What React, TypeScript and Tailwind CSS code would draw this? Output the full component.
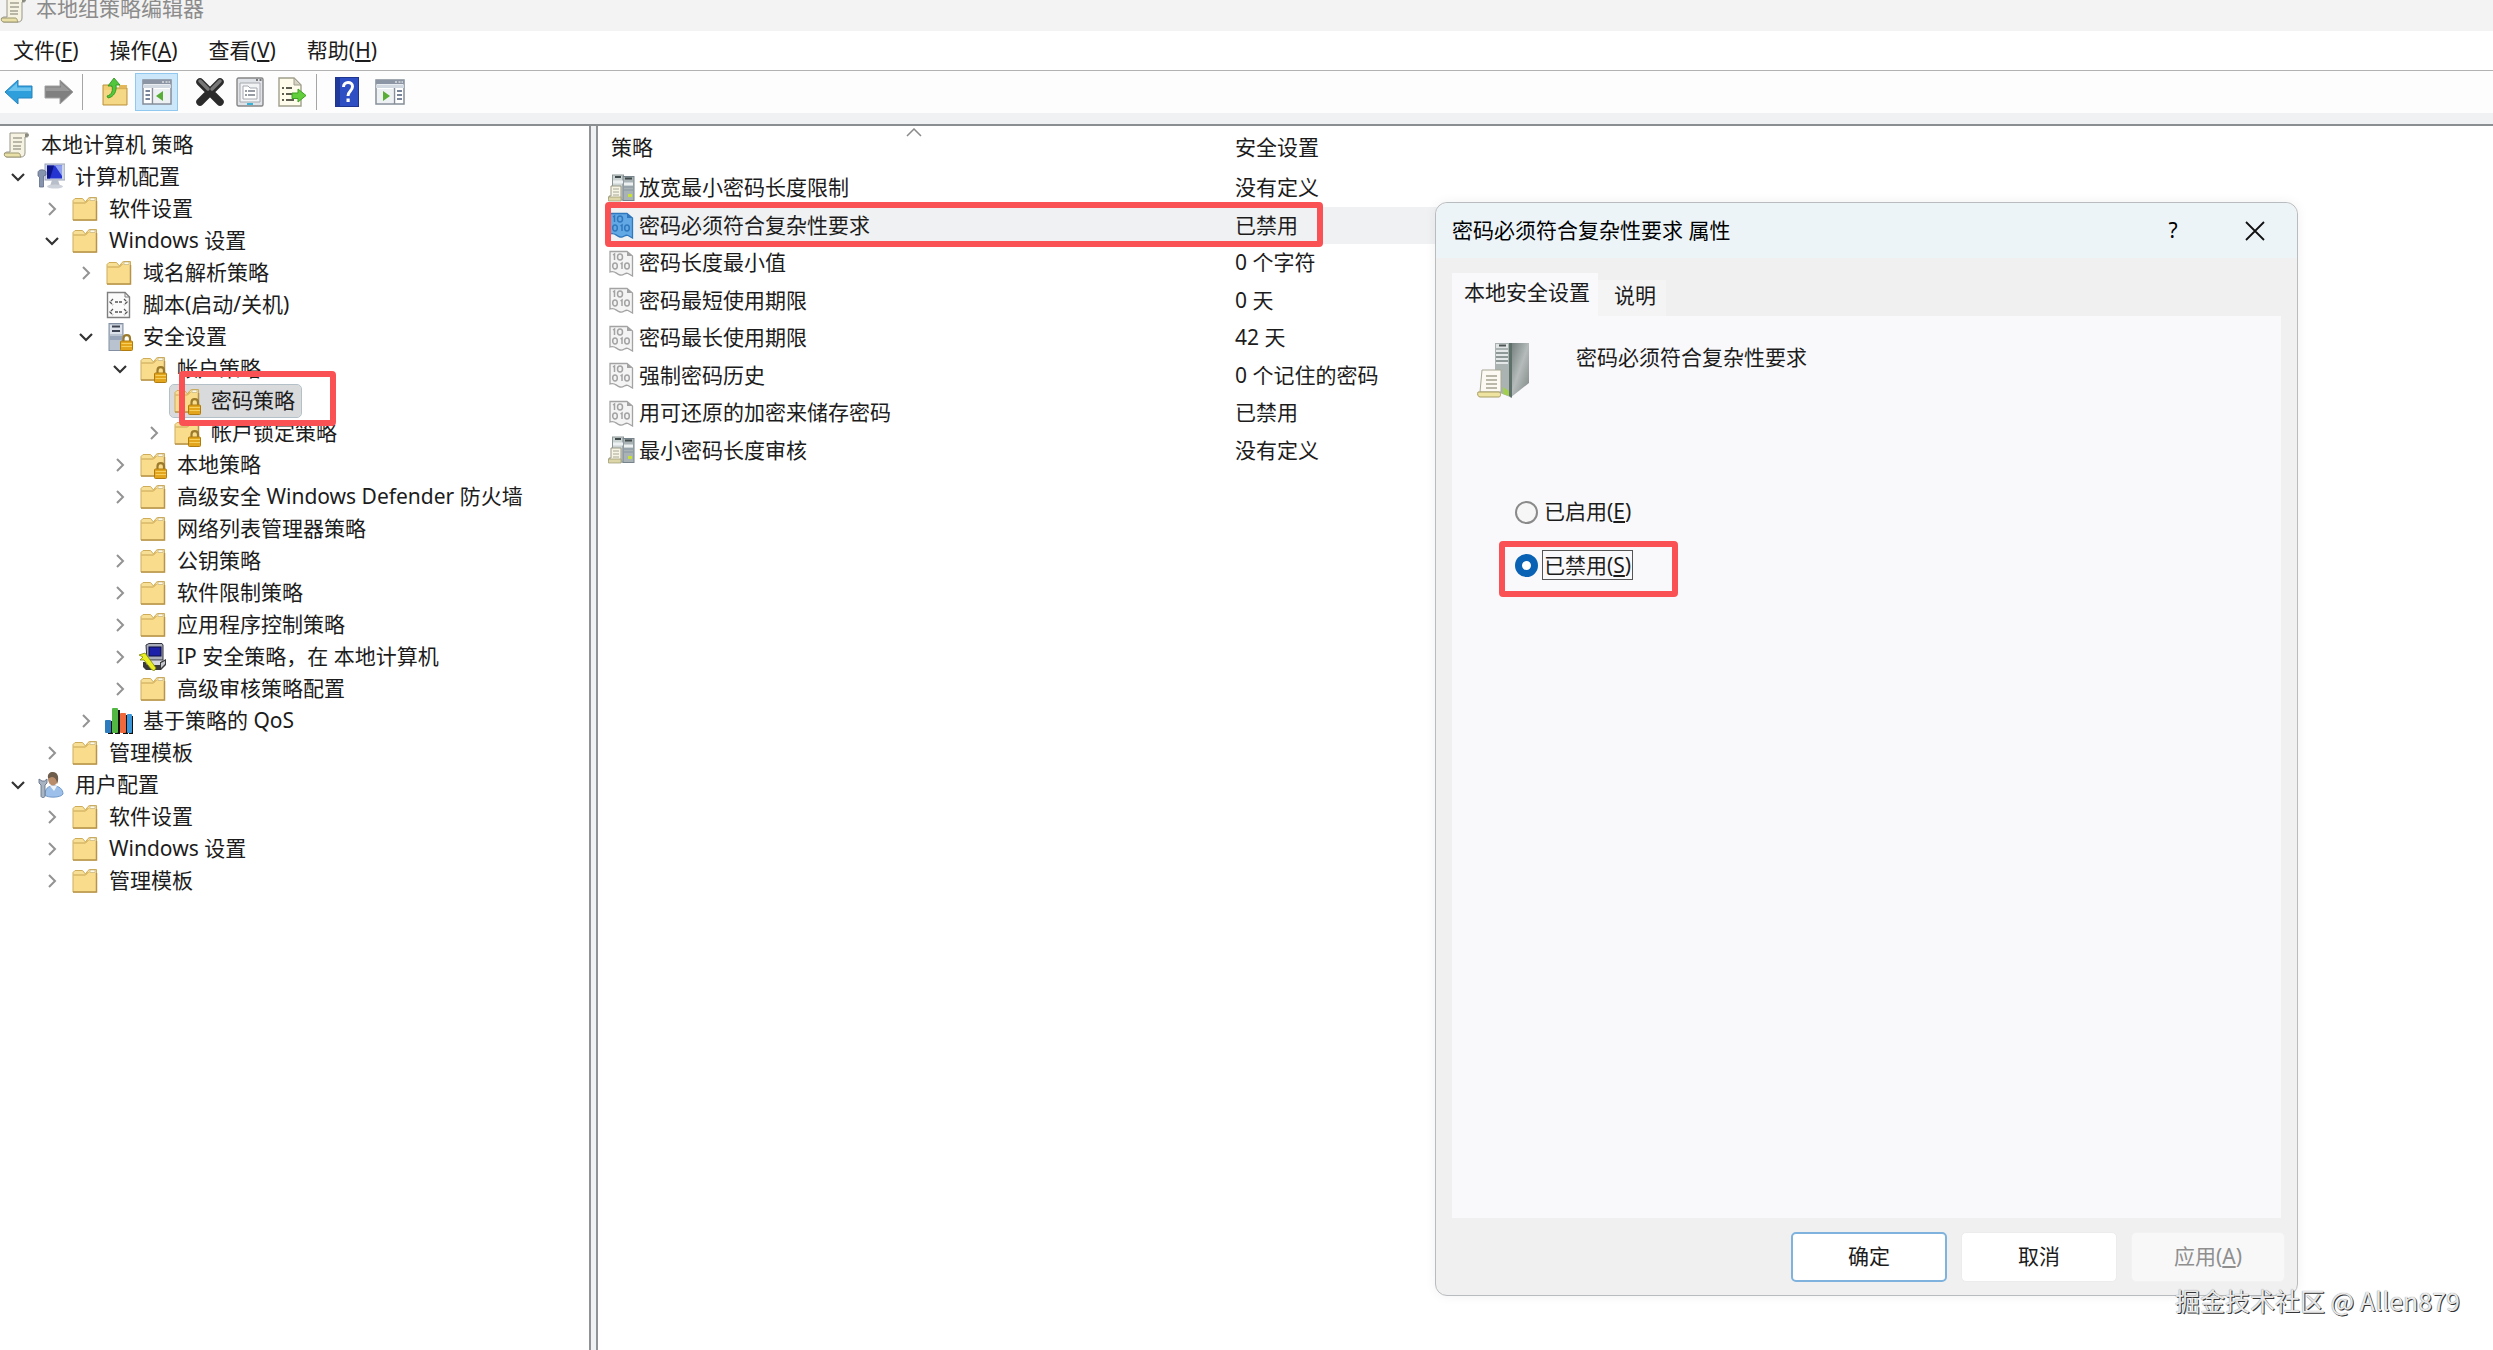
import { useState } from 'react'
import type { ReactNode } from 'react'

type IconName = 'scroll' | 'computer' | 'folder' | 'folderLock' | 'script' | 'security' | 'ipsec' | 'qos' | 'user'

type TreeNode = {
  level: number
  label: string
  icon: IconName
  state?: 'open' | 'closed'
  selected?: boolean
}

const tree: TreeNode[] = [
  { level: 0, label: '本地计算机 策略', icon: 'scroll' },
  { level: 1, label: '计算机配置', icon: 'computer', state: 'open' },
  { level: 2, label: '软件设置', icon: 'folder', state: 'closed' },
  { level: 2, label: 'Windows 设置', icon: 'folder', state: 'open' },
  { level: 3, label: '域名解析策略', icon: 'folder', state: 'closed' },
  { level: 3, label: '脚本(启动/关机)', icon: 'script' },
  { level: 3, label: '安全设置', icon: 'security', state: 'open' },
  { level: 4, label: '帐户策略', icon: 'folderLock', state: 'open' },
  { level: 5, label: '密码策略', icon: 'folderLock', selected: true },
  { level: 5, label: '帐户锁定策略', icon: 'folderLock', state: 'closed' },
  { level: 4, label: '本地策略', icon: 'folderLock', state: 'closed' },
  { level: 4, label: '高级安全 Windows Defender 防火墙', icon: 'folder', state: 'closed' },
  { level: 4, label: '网络列表管理器策略', icon: 'folder' },
  { level: 4, label: '公钥策略', icon: 'folder', state: 'closed' },
  { level: 4, label: '软件限制策略', icon: 'folder', state: 'closed' },
  { level: 4, label: '应用程序控制策略', icon: 'folder', state: 'closed' },
  { level: 4, label: 'IP 安全策略，在 本地计算机', icon: 'ipsec', state: 'closed' },
  { level: 4, label: '高级审核策略配置', icon: 'folder', state: 'closed' },
  { level: 3, label: '基于策略的 QoS', icon: 'qos', state: 'closed' },
  { level: 2, label: '管理模板', icon: 'folder', state: 'closed' },
  { level: 1, label: '用户配置', icon: 'user', state: 'open' },
  { level: 2, label: '软件设置', icon: 'folder', state: 'closed' },
  { level: 2, label: 'Windows 设置', icon: 'folder', state: 'closed' },
  { level: 2, label: '管理模板', icon: 'folder', state: 'closed' },
]

const policies = [
  { name: '放宽最小密码长度限制', value: '没有定义', kind: 'server' },
  { name: '密码必须符合复杂性要求', value: '已禁用', kind: 'binary', selected: true },
  { name: '密码长度最小值', value: '0 个字符', kind: 'binary' },
  { name: '密码最短使用期限', value: '0 天', kind: 'binary' },
  { name: '密码最长使用期限', value: '42 天', kind: 'binary' },
  { name: '强制密码历史', value: '0 个记住的密码', kind: 'binary' },
  { name: '用可还原的加密来储存密码', value: '已禁用', kind: 'binary' },
  { name: '最小密码长度审核', value: '没有定义', kind: 'server' },
]

const indent = ['pl-0', 'pl-0', 'pl-[34px]', 'pl-[68px]', 'pl-[102px]', 'pl-[136px]']

function ScrollIcon() {
  return (
    <svg width="28" height="28" viewBox="0 0 28 28" aria-hidden="true">
      <path d="M7 2H24C26 2 26 6 24 6H22V22C22 25 20 26 18 26H4C1 26 1 21 4 21H7Z" fill="#f6f3e2" stroke="#98968a" />
      <path d="M1.500 22H15C18 22 17 26 18 26H4C1.500 26 1 24 1.500 22Z" fill="#e9e0a8" stroke="#9c9670" />
      <path d="M22 6V3C23 1.500 26 2 25.500 5L24 6Z" fill="#8b8a80" />
      <path d="M10 7H19M10 11H19M10 15H18M10 18H18" stroke="#a4a294" strokeWidth="1.500" />
    </svg>
  )
}

function Lock() {
  return (
    <>
      <path d="M18.500 19V15.500C18.500 11 25 11 25 15.500V19" fill="none" stroke="#9b7a2c" strokeWidth="2.200" />
      <rect x="15.500" y="18" width="12" height="9.500" rx="1" fill="#e3a51c" stroke="#b07c10" />
      <path d="M16.500 20.500H27M16.500 23.500H27" stroke="#f6cf5c" />
    </>
  )
}

function FolderShape() {
  return (
    <>
      <path d="M2 5.500L4 3.500H11.500L14.500 7L17 3.500L18.500 2.500H25.500V25H2Z" fill="#f8df96" stroke="#cfac58" />
      <path d="M15 7.500L18 4.500H25V24.500H3V8H14Z" fill="#f9dc8c" />
      <path d="M2.500 8H14.500L17.500 5" fill="none" stroke="#c9a552" />
      <path d="M25.500 6V25H2" fill="none" stroke="#b8944a" strokeWidth="1.500" />
      <rect x="19" y="3" width="5" height="2.500" fill="#fffbe8" stroke="#b9a878" strokeWidth="0.600" />
    </>
  )
}

function TreeIcon({ name }: { name: IconName }) {
  if (name === 'scroll') return <ScrollIcon />
  return (
    <svg width="28" height="28" viewBox="0 0 28 28" aria-hidden="true">
      {(name === 'folder' || name === 'folderLock') && <FolderShape />}
      {name === 'folderLock' && <Lock />}
      {name === 'computer' && (
        <>
          <rect x="8" y="1" width="20" height="16" fill="#cfd6e4" stroke="#9aa4b8" />
          <rect x="10" y="2.500" width="15" height="13" fill="#2434d0" />
          <path d="M10 2.500H17L13 15.500H10Z" fill="#0c1488" />
          <path d="M18 2.500H25V13Z" fill="#8fa0f0" />
          <path d="M15 17H21L23 23H13Z" fill="#b9bfca" />
          <ellipse cx="18" cy="23.500" rx="8" ry="2" fill="#cdd1d9" />
          <path d="M1 9.500C1 6 8 6 9 9L9 12L6.500 13V24H2.500V14L1 13Z" fill="#8694ad" stroke="#5f6d88" strokeWidth="0.800" />
        </>
      )}
      {name === 'script' && (
        <>
          <path d="M2.500 1.500H20L24.500 6V26.500H2.500Z" fill="#fafafa" stroke="#7f7f7f" strokeWidth="1.400" />
          <path d="M20 1.500V6H24.500" fill="none" stroke="#7f7f7f" />
          <path d="M8 8L5 11L8 14M10 11H17M19 8L22 11L19 14M8 18L5 21L8 24M10 21H17M19 18L22 21L19 24" fill="none" stroke="#555" strokeWidth="1.300" strokeDasharray="3 1" />
        </>
      )}
      {name === 'security' && (
        <>
          <rect x="4" y="0.500" width="14" height="27" fill="#b9c2cf" stroke="#8390a4" />
          <path d="M5 2H17V11H5Z" fill="#dde2ea" />
          <path d="M7 3.500H15M7 8H15" stroke="#3d4350" strokeWidth="1.800" />
          <path d="M5 13H17V17H5Z" fill="#98a4b8" />
          <Lock />
        </>
      )}
      {name === 'ipsec' && (
        <>
          <path d="M4 19H21L27 16V22L22 27H7L4 24Z" fill="#3a3a3a" />
          <path d="M7 2L10 0.500H23L24 2V17H8Z" fill="#a9adba" stroke="#30323c" />
          <rect x="10" y="4" width="12" height="9" fill="#1c20a8" stroke="#0a0a40" />
          <path d="M22 20L26 18V21L22 25Z" fill="#c4c7cf" />
          <path d="M6 18H21V22H8Z" fill="#d5d7de" />
          <path d="M0 12L6 10L9 14L17 25L15 28L12 26L5 17L1 17L4 14Z" fill="#e8ee22" stroke="#80860c" strokeWidth="0.800" />
        </>
      )}
      {name === 'qos' && (
        <>
          <path d="M3 14H8V27H3ZM10 3H15V27H10ZM18 8H23V27H18ZM24 9H28V27H24Z" fill="#111" />
          <rect x="0" y="13" width="6" height="13" rx="1" fill="#2d7cc0" />
          <rect x="7" y="1" width="6" height="25" rx="1" fill="#52b843" />
          <rect x="15" y="6" width="6" height="20" rx="1" fill="#f0693c" />
          <rect x="22" y="7" width="5" height="19" rx="1" fill="#3a96d8" />
        </>
      )}
      {name === 'user' && (
        <>
          <path d="M8 24C8 15 14 15 17 15C22 15 26 18 26 23C24 27 10 27 8 24Z" fill="#9cc0ea" stroke="#7299c9" />
          <path d="M13 15L17 20L20 15Z" fill="#eef4fb" />
          <ellipse cx="16" cy="8" rx="5" ry="6.500" fill="#b98d6c" />
          <path d="M11 7C10 1 16 0 19 2C22 4 21.500 10 20 13C20 9 18 6 15 6C13 6 12 8 11 7Z" fill="#6e5c4c" />
          <path d="M2 8V12L4 14V25C4 27 8 27 8 25V14L10 12V8L7.500 10H5Z" fill="#a8b4c2" stroke="#64748a" strokeWidth="0.900" />
        </>
      )}
    </svg>
  )
}

function Chevron({ state }: { state?: 'open' | 'closed' }) {
  return (
    <span className="flex w-[34px] shrink-0 items-center justify-center pl-px">
      {state === 'open' && (
        <svg width="14" height="10" viewBox="0 0 14 10" aria-hidden="true">
          <path d="M1 2L7 8L13 2" fill="none" stroke="#333" strokeWidth="2.200" />
        </svg>
      )}
      {state === 'closed' && (
        <svg width="10" height="14" viewBox="0 0 10 14" aria-hidden="true">
          <path d="M2 1L8 7L2 13" fill="none" stroke="#939393" strokeWidth="2" />
        </svg>
      )}
    </span>
  )
}

function PolicyIcon({ kind, selected }: { kind: string; selected?: boolean }) {
  if (kind === 'server') {
    return (
      <svg width="28" height="28" viewBox="0 0 28 28" aria-hidden="true">
        <rect x="4.500" y="1" width="11" height="25" fill="#ccd3d3" stroke="#8b9595" />
        <rect x="15" y="2.500" width="11" height="24" fill="#a9b3b6" stroke="#76838a" />
        <path d="M7 3H13M17 4.500H24" stroke="#414a4a" strokeWidth="2" />
        <path d="M5 8H15M16 10H25" stroke="#eef1f1" strokeWidth="3" />
        <path d="M16 13H25M16 16H25" stroke="#8794a0" />
        <rect x="20" y="20" width="4" height="3" fill="#c8e03c" />
        <path d="M3 12H13V25H1V22H3Z" fill="#f7f5e6" stroke="#9b9984" />
        <path d="M0.500 23H13V27H0.500Z" fill="#dcd6a8" stroke="#9b9670" strokeWidth="0.700" />
        <path d="M5 15H11M5 18H11M5 21H11" stroke="#a8a694" />
      </svg>
    )
  }
  const paper = selected ? '#62a8e4' : '#f4f4f4'
  const line = selected ? '#2f78bd' : '#a3a3a3'
  return (
    <svg width="28" height="28" viewBox="0 0 28 28" aria-hidden="true">
      <path d="M2 2.500H19L24.500 7V27L20 24.500C17 23 16 27 12 26C8 25 7 21 2 23Z" fill={paper} stroke={line} strokeWidth="1.300" />
      <path d="M19 2.500V7H24.500Z" fill={line} />
      <g fill="none" stroke={line} strokeWidth="1.500">
        <path d="M5 6L6.500 5V11" />
        <ellipse cx="12" cy="8" rx="2.500" ry="3" />
        <ellipse cx="7" cy="17" rx="2.300" ry="3" />
        <path d="M12.500 15L14 14V20" />
        <ellipse cx="19" cy="17" rx="2.300" ry="3" />
      </g>
    </svg>
  )
}

function ArrowIcon({ back }: { back?: boolean }) {
  return (
    <svg width="30" height="28" viewBox="0 0 30 28" aria-hidden="true">
      {back ? (
        <>
          <path d="M1 14L14 2V8H28V20H14V26Z" fill="#2f9fdc" stroke="#2484bf" />
          <path d="M4 13L13 5V9.500H27V13Z" fill="#6cc4ee" />
        </>
      ) : (
        <>
          <path d="M29 14L16 2V8H1V20H16V26Z" fill="#808080" stroke="#a2a2a2" />
          <path d="M26 13L17 5V9.500H2V13Z" fill="#999" />
        </>
      )}
    </svg>
  )
}

function PanelIcon({ side }: { side: 'left' | 'right' }) {
  const left = side === 'left'
  return (
    <svg width="30" height="26" viewBox="0 0 30 26" aria-hidden="true">
      <rect x="1" y="1" width="28" height="24" fill="#fff" stroke="#858d98" strokeWidth="1.500" />
      <path d="M1 1H29V5H1Z" fill="#8c95a3" />
      <path d="M1 5.500H29V9H1Z" fill="#d3d9e0" />
      <path d="M20 3H22M23.500 3H25.500M26.500 3H28" stroke="#fff" />
      <path d={left ? 'M10.500 9V25' : 'M19.500 9V25'} stroke="#858d98" strokeWidth="1.500" />
      <path d={left ? 'M3.500 12H8M3.500 16H8M3.500 20H8' : 'M22 12H27M22 16H27M22 20H27'} stroke="#4b5c78" strokeWidth="1.700" />
      <path d={left ? 'M12 10H28V24H12Z' : 'M2 10H18V24H2Z'} fill="#edf1f4" />
      <path d={left ? 'M21 12V22L14 17Z' : 'M8 12V22L15 17Z'} fill="#57ad35" />
    </svg>
  )
}

function ToolButton({ label, className = '', pressed, children }: { label: string; className?: string; pressed?: boolean; children: ReactNode }) {
  return (
    <button
      type="button"
      aria-label={label}
      className={`flex h-[38px] items-center justify-center ${pressed ? 'border border-[#90c8f0] bg-[#cce6fa]' : ''} ${className}`}
    >
      {children}
    </button>
  )
}

function Toolbar() {
  return (
    <div className="flex h-[42px] items-center bg-[#fdfdfd]">
      <ToolButton label="后退" className="ml-1 w-[30px]"><ArrowIcon back /></ToolButton>
      <ToolButton label="前进" className="ml-[10px] w-[30px]"><ArrowIcon /></ToolButton>
      <span className="ml-2 h-9 w-px bg-[#a5a5a5]" />
      <ToolButton label="上一级" className="ml-4 w-[32px]">
        <svg width="28" height="30" viewBox="0 0 28 30" aria-hidden="true">
          <path d="M2 8H9L12 11H26V28H2Z" fill="#f2cf72" stroke="#bb9340" />
          <path d="M3 13H25V27H3Z" fill="#f5d885" />
          <path d="M18 8H26V11H18Z" fill="#e2b85b" />
          <path d="M6 19C11 18 12 13 11 9L7 9L13 1L19 8H15C16 14 13 20 7 21Z" fill="#52c63c" stroke="#33961f" strokeWidth="0.900" />
        </svg>
      </ToolButton>
      <ToolButton label="显示/隐藏控制台树" className="ml-1 w-[43px]" pressed><PanelIcon side="left" /></ToolButton>
      <ToolButton label="删除" className="ml-4 w-[32px]">
        <svg width="30" height="30" viewBox="0 0 30 30" aria-hidden="true">
          <path d="M5 5L25 25M25 5L5 25" stroke="#2b2b2b" strokeWidth="7.500" strokeLinecap="round" />
          <path d="M5 4L13 12M25 4L17 12" stroke="#777" strokeWidth="3.500" strokeLinecap="round" />
        </svg>
      </ToolButton>
      <ToolButton label="属性" className="ml-2 w-[32px]">
        <svg width="28" height="30" viewBox="0 0 28 30" aria-hidden="true">
          <rect x="1" y="1" width="26" height="28" rx="1.500" fill="#dfe2e6" stroke="#858585" strokeWidth="1.400" />
          <path d="M20 3H22M23.500 3H25.500" stroke="#555" strokeWidth="1.500" />
          <path d="M4 6H24V25H4Z" fill="#f2f3f5" stroke="#a5a8ae" />
          <path d="M7 9H12L14 11H21V22H7Z" fill="#fff" stroke="#a5a8ae" />
          <path d="M9 14H11M12 14H19M9 18H11M12 18H19" stroke="#777d88" strokeWidth="1.500" />
          <path d="M11 27H17" stroke="#36b3d8" strokeWidth="2" />
        </svg>
      </ToolButton>
      <ToolButton label="导出列表" className="ml-[10px] w-[32px]">
        <svg width="30" height="30" viewBox="0 0 30 30" aria-hidden="true">
          <path d="M2 1H17L24 8V29H2Z" fill="#fffceb" stroke="#a09e8c" strokeWidth="1.400" />
          <path d="M17 1V8H24Z" fill="#d8d5c4" stroke="#a09e8c" />
          <path d="M5 11H7M9 11H15M5 17H7M9 17H15M5 23H7M9 23H17" stroke="#5d5d50" strokeWidth="1.800" />
          <path d="M15 16H21V12L29 18.500L21 25V21.500H15Z" fill="#62ce3c" stroke="#3ca222" />
        </svg>
      </ToolButton>
      <span className="ml-2 h-9 w-px bg-[#a5a5a5]" />
      <ToolButton label="帮助" className="ml-[14px] w-[32px]">
        <svg width="24" height="30" viewBox="0 0 24 30" aria-hidden="true">
          <rect x="0.500" y="0.500" width="23" height="29" fill="#2e4fc4" stroke="#1e3590" />
          <path d="M1 1H5V29H1Z" fill="#203a9c" />
          <path d="M8.500 10C8.500 4 17.500 4 17.500 9.500C17.500 14 13 14 13 19" fill="none" stroke="#fff" strokeWidth="3" />
          <rect x="11.500" y="21.500" width="3.200" height="3.500" fill="#fff" />
        </svg>
      </ToolButton>
      <ToolButton label="显示/隐藏操作窗格" className="ml-[10px] w-[34px]"><PanelIcon side="right" /></ToolButton>
    </div>
  )
}

function Highlight({ className }: { className: string }) {
  return <span className={`pointer-events-none absolute rounded border-[6px] border-[#fa5254] ${className}`} />
}

function TreePane() {
  return (
    <nav className="w-[591px] shrink-0 border-r-2 border-[#8f9396] bg-white pt-[3px]" aria-label="控制台树">
      <ul>
        {tree.map((node, i) => (
          <li key={i} className={`flex h-8 ${indent[node.level]}`}>
            {node.level > 0 && <Chevron state={node.state} />}
            <button
              type="button"
              className={`relative flex items-center gap-[10px] pr-[6px] pl-[3px] whitespace-nowrap ${node.selected ? 'rounded-sm bg-[#d9dadc] outline outline-[#b4c0c8]' : ''}`}
            >
              <TreeIcon name={node.icon} />
              {node.label}
              {node.selected && <Highlight className="-top-[14px] -right-[35px] -bottom-[9px] left-[9px] z-10" />}
            </button>
          </li>
        ))}
      </ul>
    </nav>
  )
}

function PolicyTable() {
  return (
    <main className="relative grow border-l-2 border-[#8f9396] bg-white pl-[10px]">
      <svg className="absolute top-[2px] left-[308px]" width="16" height="9" viewBox="0 0 16 9" aria-hidden="true">
        <path d="M1 8L8 1L15 8" fill="none" stroke="#8a8a8a" strokeWidth="1.500" />
      </svg>
      <table className="h-[343px] w-[1100px] table-fixed border-collapse text-left">
        <thead>
          <tr className="h-[43px]">
            <th className="w-[627px] pl-[3px] font-normal">策略</th>
            <th className="font-normal">安全设置</th>
          </tr>
        </thead>
        <tbody>
          {policies.map(p => (
            <tr key={p.name} className={p.selected ? 'bg-[#f0f1f2]' : ''}>
              <td className="relative p-0">
                <span className="flex items-center gap-[3px]">
                  <PolicyIcon kind={p.kind} selected={p.selected} />
                  {p.name}
                </span>
                {p.selected && <Highlight className="-top-[5px] -right-[88px] -bottom-[3px] -left-[3px]" />}
              </td>
              <td className="p-0">{p.value}</td>
            </tr>
          ))}
        </tbody>
      </table>
    </main>
  )
}

function ServerIcon() {
  return (
    <svg width="54" height="58" viewBox="0 0 54 58" aria-hidden="true">
      <defs>
        <linearGradient id="side" x1="0" y1="0" x2="1" y2="1">
          <stop offset="0" stopColor="#6f7a78" />
          <stop offset="0.500" stopColor="#b4bbba" />
          <stop offset="1" stopColor="#7c8583" />
        </linearGradient>
      </defs>
      <path d="M18 2H33V56L18 50Z" fill="#aab3b2" />
      <path d="M33 2H52V42L33 57Z" fill="url(#side)" />
      <path d="M32 2H35V57L32 55Z" fill="#5d716a" />
      <path d="M19 3H31V7H19Z" fill="#dfe3e3" />
      <path d="M22 4.500H29" stroke="#4d5555" strokeWidth="2" />
      <path d="M19 10H31M19 14H31M19 18H31M19 22H31" stroke="#e3e7e7" strokeWidth="2" />
      <path d="M19 12H31M19 16H31M19 20H31" stroke="#717c7c" />
      <path d="M26 46L32 50V55L26 53Z" fill="#a3cf50" />
      <path d="M5 29H24V51H3Z" fill="#fbf9f1" stroke="#a9a795" />
      <path d="M1 51H22C24 51 24 56 22 56H3C1 56 0 53 1 51Z" fill="#eee3a0" stroke="#a79c62" />
      <path d="M9 35H20M9 39H20M9 43H20M9 47H20" stroke="#a5a291" strokeWidth="1.500" />
    </svg>
  )
}

function PropertiesDialog() {
  const [value, setValue] = useState('disabled')
  const radioClass = 'size-[23px] appearance-none rounded-full border-2 border-[#8a8a8a] bg-[#f6f6f6] checked:border-[7px] checked:border-[#0a62b4] checked:bg-white'

  return (
    <section
      role="dialog"
      aria-labelledby="dialog-title"
      className="absolute top-[202px] left-[1435px] w-[863px] rounded-xl border border-[#b9bcbe] bg-[#f0f0f1] pb-[13px] shadow-[0_0_12px_rgba(0,0,0,0.06)]"
    >
      <header className="flex h-[55px] items-center rounded-t-xl bg-[#edf4f8] pr-6 pl-4 text-black">
        <h2 id="dialog-title" className="grow">密码必须符合复杂性要求 属性</h2>
        <button type="button" aria-label="帮助" className="mr-[46px] w-9 text-center">?</button>
        <button type="button" aria-label="关闭" className="flex size-9 items-center justify-center">
          <svg width="20" height="20" viewBox="0 0 20 20" aria-hidden="true">
            <path d="M1 1L19 19M19 1L1 19" stroke="#111" strokeWidth="1.800" />
          </svg>
        </button>
      </header>
      <div className="px-4">
        <div role="tablist" className="flex h-[58px] items-end">
          <button type="button" role="tab" aria-selected="true" className="h-[43px] bg-[#f9f9fb] pr-2 pb-1 pl-3">本地安全设置</button>
          <button type="button" role="tab" aria-selected="false" className="h-9 bg-[#f4f4f5] pr-[10px] pb-1 pl-4">说明</button>
        </div>
        <div role="tabpanel" className="min-h-[902px] bg-[#f9f9fb] px-[25px] pt-[25px]">
          <div className="flex items-start gap-[45px]">
            <ServerIcon />
            <p className="leading-8">密码必须符合复杂性要求</p>
          </div>
          <fieldset aria-label="安全设置" className="mt-[97px] flex flex-col items-start gap-[21px] pl-[38px]">
            <div className="flex h-8 items-center gap-1">
              <input id="opt-enabled" type="radio" name="state" className={radioClass} checked={value === 'enabled'} onChange={() => setValue('enabled')} />
              <label htmlFor="opt-enabled" className="px-[2px]">已启用(<u>E</u>)</label>
            </div>
            <div className="relative flex h-8 items-center gap-1">
              <input id="opt-disabled" type="radio" name="state" className={radioClass} checked={value === 'disabled'} onChange={() => setValue('disabled')} />
              <label htmlFor="opt-disabled" className="border border-[#555] px-px leading-7">已禁用(<u>S</u>)</label>
              <Highlight className="-top-2 -right-[45px] -bottom-4 -left-4" />
            </div>
          </fieldset>
        </div>
      </div>
      <footer className="mt-[14px] flex justify-end gap-[14px] pr-3">
        <button type="button" className="h-[50px] w-[156px] rounded-[5px] border-2 border-[#7fb2dc] bg-white">确定</button>
        <button type="button" className="h-[50px] w-[156px] rounded-[5px] border border-[#ececec] bg-white">取消</button>
        <button type="button" disabled className="h-[50px] w-[154px] rounded-[5px] border border-[#f2f2f2] bg-[#f8f8f9] text-[#8f8f8f]">应用(<u>A</u>)</button>
      </footer>
    </section>
  )
}

export default function App() {
  const menus = [['文件', 'F'], ['操作', 'A'], ['查看', 'V'], ['帮助', 'H']]

  return (
    <div
      className="relative flex min-h-screen flex-col overflow-hidden bg-white text-[21px] text-[#1c1c1c]"
      style={{ fontFamily: '"Noto Sans", "Noto Sans CJK SC", sans-serif' }}
    >
      <header className="flex h-[31px] items-start gap-2 bg-[#f3f3f3]">
        <span className="flex h-6 items-end"><ScrollIcon /></span>
        <h1 className="leading-4 text-[#8b8b8b]">本地组策略编辑器</h1>
      </header>
      <div role="menubar" className="flex h-[40px] items-center gap-[31px] border-b border-[#b2b2b2] pl-[13px]">
        {menus.map(([label, key]) => (
          <button key={key} type="button" role="menuitem">{label}(<u>{key}</u>)</button>
        ))}
      </div>
      <Toolbar />
      <div className="h-[11px] bg-[#eff1f2]" />
      <div className="flex grow gap-[5px] border-t-2 border-[#8a8e91] bg-[#eff1f2]">
        <TreePane />
        <PolicyTable />
      </div>
      <PropertiesDialog />
      <p
        className="absolute right-[33px] bottom-[30px] text-[25px] leading-10 text-[#e9e9e9] [text-shadow:1px_1px_0_#333,0_0_1px_#777]"
        style={{ fontFamily: '"Noto Sans CJK SC", sans-serif' }}
      >
        掘金技术社区 @ Allen879
      </p>
    </div>
  )
}
